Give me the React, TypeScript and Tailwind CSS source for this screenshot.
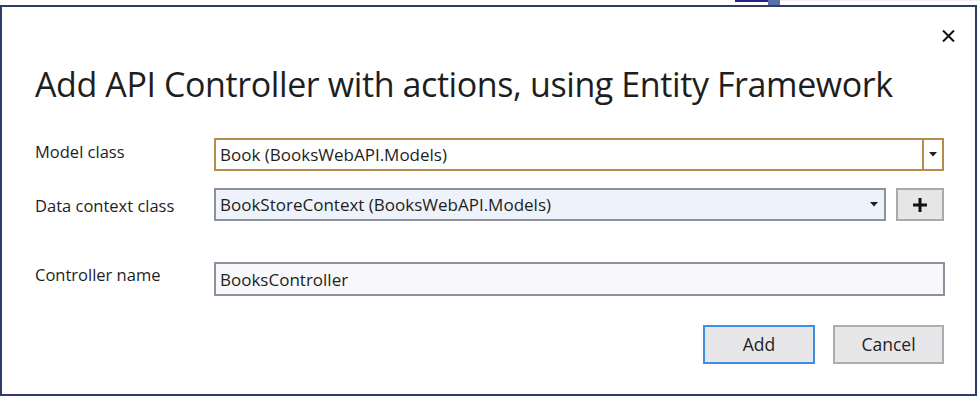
import React from "react";

const font = { fontFamily: '"Open Sans", "Noto Sans", sans-serif' };

function Arrow() {
  return (
    <svg width="8" height="5" viewBox="0 0 8 5">
      <path d="M0 0 H8 L4 4.5 Z" fill="#1e1e1e" />
    </svg>
  );
}

export default function App() {
  return (
    <div className="w-[979px] h-[398px] bg-white overflow-hidden" style={font}>
      <div className="flex h-[5px]">
        <div className="w-[735px]" />
        <div className="w-[33px] border-t-2 border-[#23238a]" />
        <div className="w-[12px] h-[5px] bg-[#5b6fa8]" />
        <div className="flex-1 border-t border-[#eef0f5]" />
      </div>
      <div className="w-[977px] h-[391px] border-2 border-[#2c3e66] bg-white flex flex-col text-[#1e1e1e]">
        <div className="flex justify-end pt-[23px] pr-[20px]">
          <svg width="13" height="12" viewBox="0 0 13 12">
            <path d="M1 0.5 L12 11.5 M12 0.5 L1 11.5" stroke="#111" strokeWidth="2" />
          </svg>
        </div>
        <div className="mt-[19px] pl-[33px] h-[46px] text-[34px] leading-[46px] tracking-[-0.4px] whitespace-nowrap">
          Add API Controller with actions, using Entity Framework
        </div>

        <div className="mt-[31px] pl-[33px] flex items-start">
          <div className="w-[179px] mt-[4px] text-[16.5px] leading-[20px]">Model class</div>
          <div className="w-[730px] h-[33px] border-2 border-[#b38e4c] bg-white flex">
            <div className="flex-1 pl-[4px] pt-[5px] text-[17px] leading-[20px]">Book (BooksWebAPI.Models)</div>
            <div className="w-[20px] border-l-2 border-[#b38e4c] flex items-center justify-center">
              <Arrow />
            </div>
          </div>
        </div>

        <div className="mt-[17px] pl-[33px] flex items-start">
          <div className="w-[179px] mt-[8px] text-[16.5px] leading-[20px]">Data context class</div>
          <div className="w-[672px] h-[33px] border-2 border-[#8d929c] bg-[#eef2fa] flex">
            <div className="flex-1 pl-[4px] pt-[5px] text-[17px] leading-[20px]">BookStoreContext (BooksWebAPI.Models)</div>
            <div className="w-[20px] flex items-center justify-center">
              <Arrow />
            </div>
          </div>
          <div className="ml-[10px] w-[48px] h-[33px] border-2 border-[#a9a9a9] bg-[#e6e6e6] flex items-center justify-center">
            <svg width="14" height="14" viewBox="0 0 14 14">
              <rect x="5.5" y="0" width="3" height="14" fill="#111" />
              <rect x="0" y="5.5" width="14" height="3" fill="#111" />
            </svg>
          </div>
        </div>

        <div className="mt-[41px] pl-[33px] flex items-start">
          <div className="w-[179px] mt-[3px] text-[16.5px] leading-[20px]">Controller name</div>
          <div className="w-[731px] h-[34px] border-2 border-[#8d929c] bg-[#f8f8fa] flex">
            <div className="flex-1 pl-[4px] pt-[6px] text-[17px] leading-[20px]">BooksController</div>
          </div>
        </div>

        <div className="mt-[29px] flex justify-end pr-[31px] gap-[18px]">
          <div className="w-[112px] h-[39px] border-2 border-[#3f8fe0] bg-[#e7e7ea] flex items-center justify-center text-[17.5px]">
            Add
          </div>
          <div className="w-[111px] h-[39px] border-2 border-[#adadad] bg-[#e7e7ea] flex items-center justify-center text-[17.5px]">
            Cancel
          </div>
        </div>
      </div>
    </div>
  );
}
